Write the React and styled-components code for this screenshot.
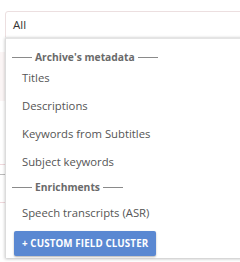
import React from 'react'
import styled, { createGlobalStyle } from 'styled-components'

const Global = createGlobalStyle`
  html, body {
    margin: 0;
    padding: 0;
    background: #fff;
  }
  body {
    font-family: "Open Sans", "Noto Sans", sans-serif;
    width: 240px;
    height: 262px;
    overflow: hidden;
  }
`

const Page = styled.div`
  position: relative;
  width: 240px;
  height: 262px;
  overflow: hidden;
`

const Backdrop = styled.div`
  display: flex;
  flex-direction: column;
  padding-top: 52px;
`

const BackRow = styled.div`
  height: ${p => p.h}px;
  background: ${p => p.bg || 'transparent'};
  border-bottom: 1px solid ${p => p.line || 'transparent'};
`

const BackText = styled.div`
  margin-top: 4px;
  padding-left: 2px;
  font-size: 10px;
  line-height: 10px;
  color: #444;
  white-space: nowrap;
`

const Select = styled.div`
  position: absolute;
  left: 5px;
  top: 11px;
  width: 260px;
  height: 27px;
  box-sizing: border-box;
  display: flex;
  align-items: center;
  padding-left: 7px;
  background: #fff;
  border: 1px solid #ecdfe0;
  border-radius: 3px 0 0 0;
  font-size: 11.5px;
  color: #333;
`

const Menu = styled.div`
  position: absolute;
  left: 5px;
  top: 37px;
  width: 260px;
  height: 221px;
  box-sizing: border-box;
  display: flex;
  flex-direction: column;
  background: #fff;
  border-top: 2px solid #e4e4e4;
  border-left: 1px solid #dcdcdc;
  box-shadow: 0 1px 3px rgba(0, 0, 0, 0.25);
  padding-top: 12px;
`

const GroupLabel = styled.div`
  display: flex;
  align-items: center;
  gap: 3px;
  height: 12px;
  margin-top: ${p => p.gap || 0}px;
  padding-left: 6px;
  font-size: 10.3px;
  font-weight: 700;
  color: #6a6a6a;
  &::before, &::after {
    content: '';
    width: 20px;
    height: 1px;
    background: #8a8a8a;
  }
`

const Option = styled.div`
  height: 28px;
  margin-top: ${p => p.gap || 0}px;
  display: flex;
  align-items: center;
  padding-left: 16px;
  font-size: 11.3px;
  color: #555;
`

const Button = styled.button`
  align-self: flex-start;
  margin: 5px 0 0 8px;
  height: 25px;
  padding: 0 8px;
  border: none;
  border-radius: 2px;
  background: #5a88d2;
  box-shadow: 0 1px 2px rgba(0, 0, 0, 0.3);
  color: #fff;
  font-family: "Open Sans", "Noto Sans", sans-serif;
  font-size: 9.8px;
  font-weight: 700;
  letter-spacing: 0.1px;
`

export default function App() {
  return (
    <Page>
      <Global />
      <Backdrop>
        <BackRow h={48} bg="#fbf5f5" />
        <BackRow h={63} line="#f0d8dc" />
        <BackRow h={9} line="#bbb" />
        <BackRow h={27} line="#f0d8dc" />
        <BackRow h={59} />
        <BackText>Of the records, most are from the archive</BackText>
      </Backdrop>
      <Select>All</Select>
      <Menu>
        <GroupLabel>Archive's metadata</GroupLabel>
        <Option>Titles</Option>
        <Option>Descriptions</Option>
        <Option>Keywords from Subtitles</Option>
        <Option>Subject keywords</Option>
        <GroupLabel gap={6}>Enrichments</GroupLabel>
        <Option gap={5}>Speech transcripts (ASR)</Option>
        <Button>+ CUSTOM FIELD CLUSTER</Button>
      </Menu>
    </Page>
  )
}
